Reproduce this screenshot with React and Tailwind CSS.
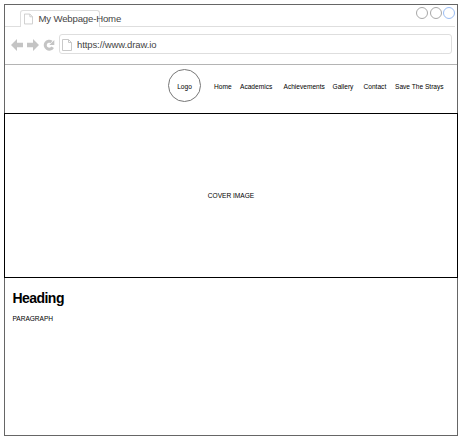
import React from 'react';

const PageIcon = ({ className }) => (
  <svg className={className} viewBox="0 0 10 12" fill="none" stroke="#c9c9c9" strokeWidth="1">
    <path d="M.5 .5H6.5L9.5 3.5V11.5H.5ZM6.5 .5V3.5H9.5" />
  </svg>
);

const Arrow = ({ className }) => (
  <svg className={className} viewBox="0 0 12 12" fill="#c4c4c4">
    <path d="M0 6L6 0V3.7H12V8.3H6V12Z" />
  </svg>
);

function Browser() {
  return (
    <header className="h-[60px] border-b border-[#b4b4b4]">
      <div className="flex h-[22px] items-end">
        <div className="h-px w-[15px] bg-[#dedede]" />
        <div className="mt-[5px] flex h-[17px] w-[80px] shrink-0 rounded-t-[3px] border border-b-0 border-[#dedede]">
          <PageIcon className="ml-[3px] mt-[2px] h-[12px] w-[9px] shrink-0" />
          <span className="ml-[5.5px] mt-[2px] whitespace-nowrap text-[9.6px] leading-[12px] tracking-[-0.17px] text-[#454545]">My Webpage-Home</span>
        </div>
        <div className="mr-[2px] flex h-full flex-1 flex-col border-b border-[#dedede]">
          <div className="mt-[2px] flex justify-end gap-[1.5px]">
            <i className="size-[12px] rounded-full border border-[#a8a8a8]" />
            <i className="size-[12px] rounded-full border border-[#a8a8a8]" />
            <i className="size-[12px] rounded-full border border-[#9abcf2]" />
          </div>
        </div>
      </div>
      <div className="flex pl-[6px] pr-[5px] pt-[7px]">
        <Arrow className="mt-[5px] h-[12px] w-[12px] shrink-0" />
        <Arrow className="ml-[4px] mt-[5px] h-[12px] w-[12px] shrink-0 rotate-180" />
        <svg className="ml-[4px] mt-[5px] h-[12px] w-[12px] shrink-0" viewBox="0 0 12 12" fill="none">
          <path d="M8.6 2.9A4 4 0 1 0 9.7 8.2" stroke="#c4c4c4" strokeWidth="3" />
          <path d="M11.3 1V6H6.3Z" fill="#c4c4c4" />
        </svg>
        <div className="ml-[4px] flex h-[20px] flex-1 rounded-[3px] border border-[#dedede]">
          <PageIcon className="ml-[2px] mt-[4px] h-[12px] w-[10px] shrink-0" />
          <span className="ml-[5px] mt-[4px] whitespace-nowrap text-[9.5px] leading-[11px] tracking-[-0.1px] text-[#454545]">https://www.draw.io</span>
        </div>
      </div>
    </header>
  );
}

export default function App() {
  return (
    <div className="h-[440px] w-[459px] overflow-hidden bg-white pl-[4px] pt-[4px] font-['Liberation_Sans',Arial,sans-serif] text-black">
      <div className="h-[432px] w-[454px] border border-[#666]">
        <Browser />
        <nav className="flex h-[48px] items-start whitespace-nowrap pl-[163px] text-[6.6px] leading-[8px]">
          <div className="mt-[4px] flex size-[33px] shrink-0 items-center justify-center rounded-full border border-[#777] pt-[2px]">Logo</div>
          <span className="ml-[13px] mt-[18px] w-[26px] shrink-0">Home</span>
          <span className="mt-[18px] w-[43.5px] shrink-0">Academics</span>
          <span className="mt-[18px] w-[49px] shrink-0">Achievements</span>
          <span className="mt-[18px] w-[31px] shrink-0">Gallery</span>
          <span className="mt-[18px] w-[31.5px] shrink-0">Contact</span>
          <span className="mt-[18px] shrink-0">Save The Strays</span>
        </nav>
        <section className="-mx-px flex h-[165px] items-center justify-center border border-black text-[6.6px] leading-[8px]">
          COVER IMAGE
        </section>
        <main className="pl-[7.5px] pt-[12px]">
          <h1 className="text-[14px] font-bold leading-[17px] tracking-[-0.55px]">Heading</h1>
          <p className="mt-[8px] text-[6.6px] leading-[8px] tracking-[-0.05px]">PARAGRAPH</p>
        </main>
      </div>
    </div>
  );
}
